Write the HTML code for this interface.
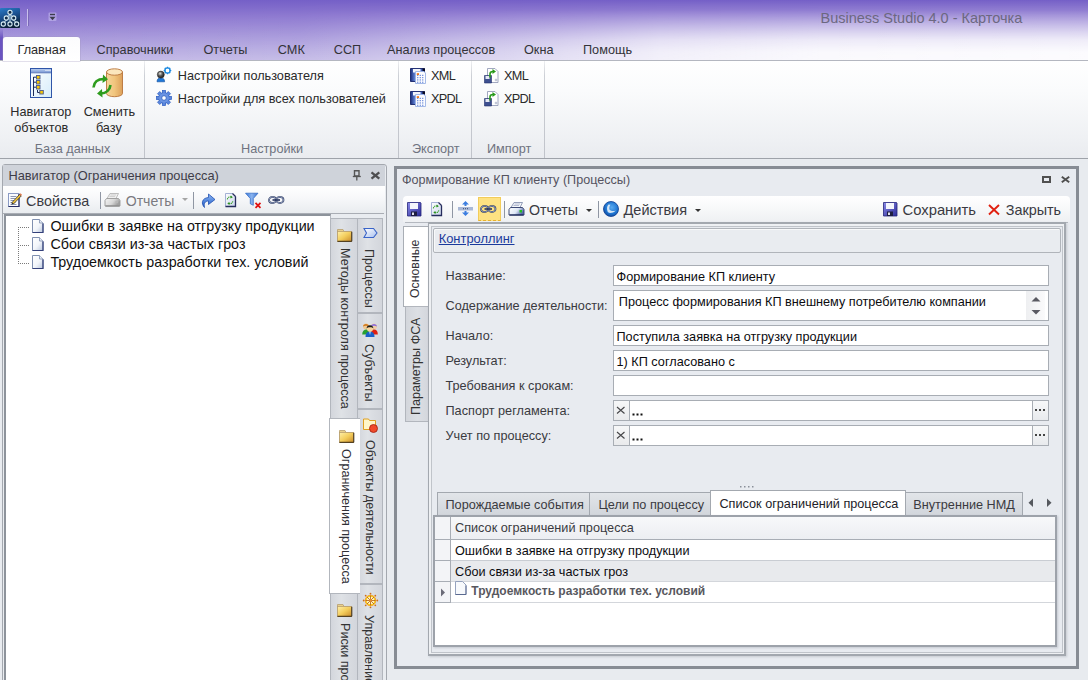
<!DOCTYPE html>
<html><head><meta charset="utf-8"><style>
*{box-sizing:border-box;margin:0;padding:0}
html,body{width:1088px;height:680px;overflow:hidden}
body{position:relative;background:#e8ebef;font-family:"Liberation Sans",sans-serif;font-size:12.7px;color:#1e1e1e}
.a{position:absolute}
.t{position:absolute;white-space:nowrap;line-height:1}
svg{position:absolute;overflow:visible}
.vt{position:absolute;white-space:nowrap;line-height:1;transform-origin:0 0;color:#333}
</style></head><body>
<div class="a" style="left:0px;top:0px;width:1088px;height:61px;background:linear-gradient(to bottom,#7560c7 0px,#8a75cf 14px,#a090d8 32px,#b4a8e0 48px,#c2b8e6 60px)"></div>
<div class="a" style="left:0px;top:0px;width:1088px;height:61px;background:linear-gradient(to right,rgba(255,255,255,0) 0px,rgba(255,255,255,0.08) 300px,rgba(255,255,255,0.45) 500px,rgba(255,255,255,0.8) 660px,rgba(255,255,255,0.92) 820px,rgba(255,255,255,0.95) 1088px);-webkit-mask-image:linear-gradient(to bottom,rgba(0,0,0,0) 0px,rgba(0,0,0,0.1) 10px,rgba(0,0,0,0.45) 24px,rgba(0,0,0,0.85) 40px,#000 52px)"></div>
<div class="a" style="left:0px;top:28px;width:3px;height:33px;background:linear-gradient(to bottom,rgba(100,80,190,0),#6a54c0 30%,#6a54c0)"></div>
<svg style="left:0px;top:8px" width="20" height="20" viewBox="0 0 20 20"><defs><linearGradient id="ai" x1="0" y1="0" x2="0.3" y2="1"><stop offset="0" stop-color="#2a7cc8"/><stop offset="0.5" stop-color="#1a4e8c"/><stop offset="1" stop-color="#0a2038"/></linearGradient></defs><rect x="0" y="0" width="20" height="20" rx="1" fill="url(#ai)"/><g stroke="#c8e0ec" stroke-width="1" fill="none"><path d="M10 6.5 L6.5 9.5 M10 6.5 L13.5 9.5 M10 6.5 V13.5 M6.5 12 L3.5 15 M13.5 12 L16.5 15"/></g><g fill="#0e2a48" stroke="#d8ecf4" stroke-width="1.1"><circle cx="10" cy="4.3" r="2.1"/><circle cx="6.3" cy="10" r="2.1"/><circle cx="13.7" cy="10" r="2.1"/><circle cx="3.3" cy="16" r="2.1"/><circle cx="10" cy="16" r="2.1"/><circle cx="16.7" cy="16" r="2.1"/></g></svg>
<div class="a" style="left:27px;top:9px;width:1px;height:17px;background:#c9c0ec"></div>
<div class="a" style="left:28px;top:9px;width:1px;height:17px;background:#7a68b8"></div>
<svg style="left:48px;top:12px" width="10" height="10" viewBox="0 0 10 10"><rect x="0.5" y="0.5" width="8" height="8.5" rx="1" fill="#c9bff0" opacity="0.55"/><path d="M2 2.5h5" stroke="#3c3c4c" stroke-width="1.4"/><path d="M1.5 4.8h6l-3 3.4z" fill="#3c3c4c"/></svg>
<div class="t" style="left:820.5px;top:11px;font-size:14.5px;color:#6c6880;">Business Studio 4.0 - Карточка</div>
<div class="a" style="left:0px;top:60px;width:1088px;height:99px;background:linear-gradient(to bottom,#ffffff 0px,#fafbfc 30px,#eef0f3 80px,#e9ebef 98px);border-top:1px solid #b4b7c0;border-bottom:1px solid #9ea2a9"></div>
<div class="a" style="left:3px;top:37px;width:77px;height:24px;background:linear-gradient(to bottom,#fbfbfd,#ffffff);border-radius:3px 3px 0 0;box-shadow:0 0 0 0.5px rgba(160,150,190,.6)"></div>
<div class="t" style="left:17.5px;top:44px;font-size:12.7px;color:#2a2a2a;">Главная</div>
<div class="t" style="left:96.5px;top:44px;font-size:12.7px;color:#333338;">Справочники</div>
<div class="t" style="left:203.5px;top:44px;font-size:12.7px;color:#333338;">Отчеты</div>
<div class="t" style="left:277.8px;top:44px;font-size:12.7px;color:#333338;">СМК</div>
<div class="t" style="left:333.8px;top:44px;font-size:12.7px;color:#333338;">ССП</div>
<div class="t" style="left:387px;top:44px;font-size:12.7px;color:#333338;">Анализ процессов</div>
<div class="t" style="left:524px;top:44px;font-size:12.7px;color:#333338;">Окна</div>
<div class="t" style="left:583px;top:44px;font-size:12.7px;color:#333338;">Помощь</div>
<div class="a" style="left:144px;top:61px;width:1px;height:97px;background:linear-gradient(to bottom,rgba(200,203,210,0.3),#cdd0d6 15%,#c0c3ca)"></div>
<div class="a" style="left:398px;top:61px;width:1px;height:97px;background:linear-gradient(to bottom,rgba(200,203,210,0.3),#cdd0d6 15%,#c0c3ca)"></div>
<div class="a" style="left:471px;top:61px;width:1px;height:97px;background:linear-gradient(to bottom,rgba(200,203,210,0.3),#cdd0d6 15%,#c0c3ca)"></div>
<div class="a" style="left:544px;top:61px;width:1px;height:97px;background:linear-gradient(to bottom,rgba(200,203,210,0.3),#cdd0d6 15%,#c0c3ca)"></div>
<svg style="left:30px;top:68px" width="23" height="30" viewBox="0 0 23 30"><defs><linearGradient id="nv" x1="0" y1="0" x2="1" y2="1"><stop offset="0" stop-color="#ffffff"/><stop offset="1" stop-color="#d6ecfa"/></linearGradient><linearGradient id="nvt" x1="0" y1="0" x2="0" y2="1"><stop offset="0" stop-color="#b8ccee"/><stop offset="1" stop-color="#7c9ad6"/></linearGradient></defs><rect x="0.5" y="0.5" width="21" height="29" fill="url(#nv)" stroke="#2f55a8" stroke-width="1"/><rect x="1" y="1" width="20" height="3.5" fill="url(#nvt)"/><path d="M1 4.8h20" stroke="#3a5aa8" stroke-width="0.8"/><g fill="#ffffff"><rect x="15.5" y="2" width="1" height="1"/><rect x="17.5" y="2" width="1" height="1"/><rect x="19.5" y="2" width="1" height="1"/></g><path d="M3.5 9v19M3.5 9.2h3M3.5 14.2h3M3.5 19.2h3M7.5 22v2.5h2.5" stroke="#1c2a5a" stroke-width="1" fill="none"/><g fill="#f8c808" stroke="#4a5a8a" stroke-width="0.9"><rect x="6.5" y="7.5" width="3.5" height="3.5"/><rect x="6.5" y="12.5" width="3.5" height="3.5"/><rect x="6.5" y="17.5" width="3.5" height="3.5"/><rect x="9.8" y="22.5" width="3.5" height="3.5"/></g></svg>
<svg style="left:91px;top:67px" width="34" height="31" viewBox="0 0 34 31"><defs><linearGradient id="db" x1="0" y1="0" x2="1" y2="0"><stop offset="0" stop-color="#f6d49a"/><stop offset="0.5" stop-color="#f1c57d"/><stop offset="1" stop-color="#dca05a"/></linearGradient></defs><path d="M15.5 5v21.5a8 3.2 0 0 0 16 0v-21.5z" fill="url(#db)" stroke="#b8743a" stroke-width="0.9"/><ellipse cx="23.5" cy="5" rx="8" ry="3.2" fill="#fbe6bd" stroke="#b8743a" stroke-width="0.9"/><path d="M2.5 20.5 C3 15 7 12 13 12" stroke="#2e9c1e" stroke-width="2.6" fill="none"/><path d="M12 7.5 L17 12.2 L11.5 16z" fill="#2e9c1e"/><path d="M19.5 18 C19 23 15 26.5 10 26.5" stroke="#2e9c1e" stroke-width="2.6" fill="none"/><path d="M11 22 L6 26.5 L11.5 30.5z" fill="#2e9c1e"/></svg>
<div class="t" style="left:10.3px;top:106px;font-size:12.7px;color:#2a2a2a;">Навигатор</div>
<div class="t" style="left:14.2px;top:122px;font-size:12.7px;color:#2a2a2a;">объектов</div>
<div class="t" style="left:83.7px;top:106px;font-size:12.7px;color:#2a2a2a;">Сменить</div>
<div class="t" style="left:95.9px;top:122px;font-size:12.7px;color:#2a2a2a;">базу</div>
<div class="t" style="left:34.7px;top:143px;font-size:12.7px;color:#6f7380;">База данных</div>
<svg style="left:156px;top:66px" width="15" height="16" viewBox="0 0 15 16"><defs><radialGradient id="hd" cx="0.4" cy="0.35" r="0.7"><stop offset="0" stop-color="#e8e8e0"/><stop offset="0.45" stop-color="#5a5a5a"/><stop offset="1" stop-color="#111"/></radialGradient></defs><path d="M1 15.8 C1 12.8 2.5 12 4.8 12 C7.1 12 8.6 12.8 8.6 15.8z" fill="#1e78d8" stroke="#0e4a9a" stroke-width="0.6"/><circle cx="4.8" cy="8.6" r="3.5" fill="url(#hd)" stroke="#222" stroke-width="0.5"/><g transform="translate(11.5,4.5)"><circle r="2.6" fill="none" stroke="#1a88e0" stroke-width="1.4"/><g stroke="#1a88e0" stroke-width="1.2"><path d="M0 -3.8v1.6M0 2.2v1.6M-3.8 0h1.6M2.2 0h1.6M-2.7 -2.7l1.1 1.1M1.6 1.6l1.1 1.1M2.7 -2.7l-1.1 1.1M-1.6 1.6l-1.1 1.1"/></g></g></svg>
<svg style="left:156px;top:90px" width="16" height="16" viewBox="0 0 16 16"><g transform="translate(8,8)"><circle r="5.3" fill="#5a86dc" stroke="#2f5fc0" stroke-width="1"/><g fill="#5a86dc" stroke="#2f5fc0" stroke-width="0.7"><rect x="-1.6" y="-7.6" width="3.2" height="3.2" transform="rotate(0)"/><rect x="-1.6" y="-7.6" width="3.2" height="3.2" transform="rotate(45)"/><rect x="-1.6" y="-7.6" width="3.2" height="3.2" transform="rotate(90)"/><rect x="-1.6" y="-7.6" width="3.2" height="3.2" transform="rotate(135)"/><rect x="-1.6" y="-7.6" width="3.2" height="3.2" transform="rotate(180)"/><rect x="-1.6" y="-7.6" width="3.2" height="3.2" transform="rotate(225)"/><rect x="-1.6" y="-7.6" width="3.2" height="3.2" transform="rotate(270)"/><rect x="-1.6" y="-7.6" width="3.2" height="3.2" transform="rotate(315)"/></g><circle r="5" fill="#6b94e2"/><circle r="2.3" fill="#ffffff" stroke="#2f5fc0" stroke-width="0.8"/></g></svg>
<div class="t" style="left:177.8px;top:70px;font-size:12.7px;color:#2a2a2a;">Настройки пользователя</div>
<div class="t" style="left:177.8px;top:93px;font-size:12.7px;color:#2a2a2a;">Настройки для всех пользователей</div>
<div class="t" style="left:241px;top:143px;font-size:12.7px;color:#6f7380;">Настройки</div>
<svg style="left:410px;top:68px" width="16" height="16" viewBox="0 0 16 16"><defs><linearGradient id="ex1" x1="0" y1="0" x2="1" y2="0"><stop offset="0" stop-color="#1a2c78"/><stop offset="0.35" stop-color="#6a8ee0"/><stop offset="1" stop-color="#2a4aa8"/></linearGradient></defs><path d="M0.5 0.5h14v13h-14z" fill="url(#ex1)" stroke="#16246a" stroke-width="0.9"/><rect x="3" y="1" width="7.5" height="3.5" fill="#f4f6fc"/><rect x="12.5" y="0.5" width="2.5" height="2.5" fill="#0a0a20"/><path d="M5.5 3.5h8.5l1.5 1.5v10.5h-10z" fill="#fbfcff" stroke="#9ab2e4" stroke-width="0.9"/><g fill="#4a70d0"><rect x="7.2" y="6.8" width="1.1" height="1.1"/><rect x="7.2" y="9.1" width="1.1" height="1.1"/><rect x="7.2" y="11.4" width="1.1" height="1.1"/><rect x="7.2" y="13.7" width="1.1" height="1.1"/><rect x="9.7" y="6.8" width="1.1" height="1.1"/><rect x="9.7" y="9.1" width="1.1" height="1.1"/><rect x="9.7" y="11.4" width="1.1" height="1.1"/><rect x="9.7" y="13.7" width="1.1" height="1.1"/><rect x="12.2" y="6.8" width="1.1" height="1.1"/><rect x="12.2" y="9.1" width="1.1" height="1.1"/><rect x="12.2" y="11.4" width="1.1" height="1.1"/><rect x="12.2" y="13.7" width="1.1" height="1.1"/></g><rect x="6.8" y="5.2" width="2.2" height="1.8" fill="#f07818"/></svg>
<svg style="left:410px;top:91px" width="16" height="16" viewBox="0 0 16 16"><defs><linearGradient id="ex2" x1="0" y1="0" x2="1" y2="0"><stop offset="0" stop-color="#1a2c78"/><stop offset="0.35" stop-color="#6a8ee0"/><stop offset="1" stop-color="#2a4aa8"/></linearGradient></defs><path d="M0.5 0.5h14v13h-14z" fill="url(#ex2)" stroke="#16246a" stroke-width="0.9"/><rect x="3" y="1" width="7.5" height="3.5" fill="#f4f6fc"/><rect x="12.5" y="0.5" width="2.5" height="2.5" fill="#0a0a20"/><path d="M5.5 3.5h8.5l1.5 1.5v10.5h-10z" fill="#fbfcff" stroke="#9ab2e4" stroke-width="0.9"/><g fill="#4a70d0"><rect x="7.2" y="6.8" width="1.1" height="1.1"/><rect x="7.2" y="9.1" width="1.1" height="1.1"/><rect x="7.2" y="11.4" width="1.1" height="1.1"/><rect x="7.2" y="13.7" width="1.1" height="1.1"/><rect x="9.7" y="6.8" width="1.1" height="1.1"/><rect x="9.7" y="9.1" width="1.1" height="1.1"/><rect x="9.7" y="11.4" width="1.1" height="1.1"/><rect x="9.7" y="13.7" width="1.1" height="1.1"/><rect x="12.2" y="6.8" width="1.1" height="1.1"/><rect x="12.2" y="9.1" width="1.1" height="1.1"/><rect x="12.2" y="11.4" width="1.1" height="1.1"/><rect x="12.2" y="13.7" width="1.1" height="1.1"/></g><rect x="6.8" y="5.2" width="2.2" height="1.8" fill="#f07818"/></svg>
<div class="t" style="left:430.9px;top:70px;font-size:12.7px;color:#2a2a2a;letter-spacing:-0.6px">XML</div>
<div class="t" style="left:430.9px;top:93px;font-size:12.7px;color:#2a2a2a;letter-spacing:-0.7px">XPDL</div>
<div class="t" style="left:412px;top:143px;font-size:12.7px;color:#6f7380;">Экспорт</div>
<svg style="left:484px;top:68px" width="15" height="16" viewBox="0 0 15 16"><path d="M3.5 0.5h7.5l3 3v11h-10.5z" fill="#ffffff" stroke="#8a92b0" stroke-width="0.8"/><circle cx="12" cy="12" r="0.9" fill="none" stroke="#8a92b0" stroke-width="0.6"/><path d="M0.5 7.5h7v7.5h-7z" fill="#3d4f90" stroke="#22306a" stroke-width="0.6"/><rect x="1.5" y="8" width="4" height="3" fill="#e6e9f4"/><path d="M6 9.5 V6 C6 4 7.5 3.5 9 3.5" stroke="#2a9a1c" stroke-width="1.6" fill="none"/><path d="M8.5 1 L12 3.6 L8.5 6z" fill="#2a9a1c"/></svg>
<svg style="left:484px;top:91px" width="15" height="16" viewBox="0 0 15 16"><path d="M3.5 0.5h7.5l3 3v11h-10.5z" fill="#ffffff" stroke="#8a92b0" stroke-width="0.8"/><circle cx="12" cy="12" r="0.9" fill="none" stroke="#8a92b0" stroke-width="0.6"/><path d="M0.5 7.5h7v7.5h-7z" fill="#3d4f90" stroke="#22306a" stroke-width="0.6"/><rect x="1.5" y="8" width="4" height="3" fill="#e6e9f4"/><path d="M6 9.5 V6 C6 4 7.5 3.5 9 3.5" stroke="#2a9a1c" stroke-width="1.6" fill="none"/><path d="M8.5 1 L12 3.6 L8.5 6z" fill="#2a9a1c"/></svg>
<div class="t" style="left:503.9px;top:70px;font-size:12.7px;color:#2a2a2a;letter-spacing:-0.6px">XML</div>
<div class="t" style="left:503.9px;top:93px;font-size:12.7px;color:#2a2a2a;letter-spacing:-0.7px">XPDL</div>
<div class="t" style="left:487px;top:143px;font-size:12.7px;color:#6f7380;">Импорт</div>
<div class="a" style="left:2px;top:164px;width:385px;height:530px;background:#e9ecf0;border:1px solid #a4a8af;border-radius:3px 3px 0 0"></div>
<div class="a" style="left:3px;top:165px;width:382px;height:21px;background:#cfd3da"></div>
<div class="t" style="left:8.4px;top:170px;font-size:12.8px;color:#3e3c48;">Навигатор (Ограничения процесса)</div>
<svg style="left:352px;top:170px" width="10" height="11" viewBox="0 0 10 11"><path d="M2.5 0.8h4.5v5.2h-4.5z" fill="none" stroke="#555" stroke-width="1.4"/><path d="M0.8 6.5h8" stroke="#555" stroke-width="1.3"/><path d="M4.8 6.5v4" stroke="#555" stroke-width="1.3"/></svg>
<svg style="left:370px;top:171px" width="11" height="9" viewBox="0 0 11 9"><path d="M1.5 1.3l7.8 6.4M9.3 1.3l-7.8 6.4" stroke="#4e4e50" stroke-width="2.3"/></svg>
<div class="a" style="left:3px;top:186px;width:382px;height:27px;background:linear-gradient(to bottom,#ffffff 0px,#f7f8fa 12px,#e9ecef 27px)"></div>
<div class="a" style="left:3px;top:213px;width:381px;height:1px;background:#a9adb4"></div>
<svg style="left:7px;top:192px" width="15" height="16" viewBox="0 0 15 16"><rect x="1.5" y="1.5" width="10.5" height="13" fill="#fafcff" stroke="#8a9ac4" stroke-width="1"/><path d="M1.5 14.5h10.5v-12.5" fill="none" stroke="#262c64" stroke-width="1.2"/><g stroke="#7f8aa8" stroke-width="0.9"><path d="M3.5 4.5h6M3.5 6.5h5M3.5 8.5h4M3.5 10.5h5M3.5 12.5h6"/></g><path d="M5 10.5 L12.5 2.5 L14.2 4 L6.5 12z" fill="#f2c43a" stroke="#222" stroke-width="0.7"/><path d="M12.5 2.5 L13.5 1.3 L15 2.8 L14.2 4z" fill="#e07a50"/><path d="M5 10.5 L4.5 12.5 L6.5 12z" fill="#222"/></svg>
<div class="t" style="left:26px;top:194px;font-size:14.4px;color:#3a3a42;">Свойства</div>
<div class="a" style="left:100px;top:192px;width:1px;height:17px;background:#8f96a3"></div>
<svg style="left:104px;top:192px" width="17" height="16" viewBox="0 0 17 16"><defs><linearGradient id="prg" x1="0" y1="0" x2="1" y2="0.4"><stop offset="0" stop-color="#f4f4f4"/><stop offset="0.6" stop-color="#d8d8d8"/><stop offset="1" stop-color="#a0a0a0"/></linearGradient></defs><path d="M6 1.5h8.5l-2.5 5h-9z" fill="#efefef" stroke="#b0b0b0" stroke-width="0.8"/><path d="M6.5 3h5.5M5.5 4.5h5.5" stroke="#c4c4c4" stroke-width="0.7"/><path d="M2.5 6.5h12l1.5 2v5.5h-15v-5.5z" fill="url(#prg)" stroke="#9a9a9a" stroke-width="0.9"/><path d="M1.5 14h14" stroke="#8a8a8a" stroke-width="1.2"/><rect x="11.5" y="9" width="2.5" height="2" fill="#b8b8b8"/></svg>
<div class="t" style="left:125.7px;top:194px;font-size:14.1px;color:#7a7a80;">Отчеты</div>
<svg style="left:182px;top:198px" width="6" height="4" viewBox="0 0 6 4"><path d="M0 0h6l-3 3z" fill="#a5a5a5"/></svg>
<div class="a" style="left:193px;top:192px;width:1px;height:17px;background:#8f96a3"></div>
<svg style="left:201px;top:192px" width="15" height="16" viewBox="0 0 15 16"><defs><linearGradient id="ra" x1="0" y1="0" x2="0" y2="1"><stop offset="0" stop-color="#8fb8f4"/><stop offset="1" stop-color="#1f5cc8"/></linearGradient></defs><path d="M3.5 15.5 C0 12 0.5 6 7.5 5.5 V2 L14 7.5 L7.5 12.5 V9 C4 9 2.5 11.5 3.5 15.5z" fill="url(#ra)" stroke="#1f4fb0" stroke-width="0.8"/></svg>
<svg style="left:224px;top:192px" width="13" height="16" viewBox="0 0 13 16"><defs><linearGradient id="rd1" x1="0" y1="0" x2="1" y2="1"><stop offset="0" stop-color="#ffffff"/><stop offset="1" stop-color="#c8d4ea"/></linearGradient></defs><path d="M1.5 1.5h7l3 3v10h-10z" fill="url(#rd1)" stroke="#9aa8d0" stroke-width="0.9"/><path d="M8.5 1.5l3 3M11.5 4.5v10h-10" fill="none" stroke="#262c5c" stroke-width="1.3"/><path d="M3.3 7.3 C3.8 5 6 4.5 7.5 5.2" stroke="#3aa02a" stroke-width="1.1" fill="none" stroke-dasharray="1.2 0.6"/><path d="M6.8 3.6 L8.8 5.3 L6.5 6.4z" fill="#2a9020"/><path d="M8.8 9.3 C8.3 11.6 6 12 4.6 11.3" stroke="#3aa02a" stroke-width="1.1" fill="none" stroke-dasharray="1.2 0.6"/><path d="M5.3 13 L3.3 11.2 L5.5 10.1z" fill="#2a9020"/></svg>
<svg style="left:245px;top:192px" width="17" height="17" viewBox="0 0 17 17"><defs><linearGradient id="fl" x1="0" y1="0" x2="1" y2="0"><stop offset="0" stop-color="#3c7ad8"/><stop offset="0.5" stop-color="#8ab4f0"/><stop offset="1" stop-color="#3c74d0"/></linearGradient></defs><path d="M0.5 1.2h12.5l-4.7 5.3v6.8l-3 -1.5v-5.3z" fill="url(#fl)" stroke="#2d66c4" stroke-width="0.7"/><path d="M10.5 10.8l5 5M15.5 10.8l-5 5" stroke="#e01010" stroke-width="1.7"/></svg>
<svg style="left:268px;top:196px" width="17" height="9" viewBox="0 0 17 9"><g fill="none"><rect x="1" y="1.2" width="7.2" height="5.6" rx="2.8" stroke="#26345e" stroke-width="1.7"/><rect x="1" y="1.2" width="7.2" height="5.6" rx="2.8" stroke="#c8d4ec" stroke-width="0.6"/><rect x="8.3" y="1.2" width="7.2" height="5.6" rx="2.8" stroke="#26345e" stroke-width="1.7"/><rect x="8.3" y="1.2" width="7.2" height="5.6" rx="2.8" stroke="#c8d4ec" stroke-width="0.6"/></g><path d="M4.5 4h7.5" stroke="#26345e" stroke-width="1.6"/></svg>
<div class="a" style="left:4px;top:214px;width:327px;height:480px;background:#fff;border-top:2px solid #8d939b;border-left:2px solid #8d939b;border-right:1px solid #b5b9c0"></div>
<svg style="left:17px;top:227px" width="14" height="40" viewBox="0 0 14 40"><g fill="#7a7a7a"><rect x="1" y="0" width="1" height="1"/><rect x="1" y="2" width="1" height="1"/><rect x="1" y="4" width="1" height="1"/><rect x="1" y="6" width="1" height="1"/><rect x="1" y="8" width="1" height="1"/><rect x="1" y="10" width="1" height="1"/><rect x="1" y="12" width="1" height="1"/><rect x="1" y="14" width="1" height="1"/><rect x="1" y="16" width="1" height="1"/><rect x="1" y="18" width="1" height="1"/><rect x="1" y="20" width="1" height="1"/><rect x="1" y="22" width="1" height="1"/><rect x="1" y="24" width="1" height="1"/><rect x="1" y="26" width="1" height="1"/><rect x="1" y="28" width="1" height="1"/><rect x="1" y="30" width="1" height="1"/><rect x="1" y="32" width="1" height="1"/><rect x="1" y="34" width="1" height="1"/><rect x="1" y="36" width="1" height="1"/><rect x="3" y="0" width="1" height="1"/><rect x="5" y="0" width="1" height="1"/><rect x="7" y="0" width="1" height="1"/><rect x="9" y="0" width="1" height="1"/><rect x="11" y="0" width="1" height="1"/><rect x="3" y="18" width="1" height="1"/><rect x="5" y="18" width="1" height="1"/><rect x="7" y="18" width="1" height="1"/><rect x="9" y="18" width="1" height="1"/><rect x="11" y="18" width="1" height="1"/><rect x="3" y="36" width="1" height="1"/><rect x="5" y="36" width="1" height="1"/><rect x="7" y="36" width="1" height="1"/><rect x="9" y="36" width="1" height="1"/><rect x="11" y="36" width="1" height="1"/></g></svg>
<svg style="left:32px;top:219px" width="12" height="14" viewBox="0 0 12 14"><defs><linearGradient id="dg0" x1="0" y1="0" x2="1" y2="1"><stop offset="0" stop-color="#ffffff"/><stop offset="0.55" stop-color="#f2f5fa"/><stop offset="1" stop-color="#b9c6dc"/></linearGradient></defs><path d="M0.5 0.5h7l3.5 3.5v9.5h-10.5z" fill="url(#dg0)" stroke="#8090b0" stroke-width="1"/><path d="M7.5 0.5v3.5h3.5" fill="#e8edf5" stroke="#8090b0" stroke-width="0.8"/><path d="M0.5 13.5h10.5v-9" fill="none" stroke="#34407a" stroke-width="1.2"/></svg>
<div class="t" style="left:50.4px;top:219px;font-size:14.3px;color:#101010;">Ошибки в заявке на отгрузку продукции</div>
<svg style="left:32px;top:237px" width="12" height="14" viewBox="0 0 12 14"><defs><linearGradient id="dg1" x1="0" y1="0" x2="1" y2="1"><stop offset="0" stop-color="#ffffff"/><stop offset="0.55" stop-color="#f2f5fa"/><stop offset="1" stop-color="#b9c6dc"/></linearGradient></defs><path d="M0.5 0.5h7l3.5 3.5v9.5h-10.5z" fill="url(#dg1)" stroke="#8090b0" stroke-width="1"/><path d="M7.5 0.5v3.5h3.5" fill="#e8edf5" stroke="#8090b0" stroke-width="0.8"/><path d="M0.5 13.5h10.5v-9" fill="none" stroke="#34407a" stroke-width="1.2"/></svg>
<div class="t" style="left:50.4px;top:237px;font-size:14.3px;color:#101010;">Сбои связи из-за частых гроз</div>
<svg style="left:32px;top:255px" width="12" height="14" viewBox="0 0 12 14"><defs><linearGradient id="dg2" x1="0" y1="0" x2="1" y2="1"><stop offset="0" stop-color="#ffffff"/><stop offset="0.55" stop-color="#f2f5fa"/><stop offset="1" stop-color="#b9c6dc"/></linearGradient></defs><path d="M0.5 0.5h7l3.5 3.5v9.5h-10.5z" fill="url(#dg2)" stroke="#8090b0" stroke-width="1"/><path d="M7.5 0.5v3.5h3.5" fill="#e8edf5" stroke="#8090b0" stroke-width="0.8"/><path d="M0.5 13.5h10.5v-9" fill="none" stroke="#34407a" stroke-width="1.2"/></svg>
<div class="t" style="left:50.4px;top:255px;font-size:14.3px;color:#101010;">Трудоемкость разработки тех. условий</div>
<div class="a" style="left:330px;top:218px;width:28px;height:201px;background:linear-gradient(to right,#d3d6dc,#dfe2e6 40%,#dadde2 60%,#d3d6dc);border:1px solid #b2b6bd"></div>
<div class="a" style="left:330px;top:593px;width:28px;height:100px;background:linear-gradient(to right,#d3d6dc,#dfe2e6 40%,#dadde2 60%,#d3d6dc);border:1px solid #b2b6bd"></div>
<div class="a" style="left:357px;top:218px;width:26px;height:95px;background:linear-gradient(to right,#d3d6dc,#dfe2e6 40%,#dadde2 60%,#d3d6dc);border:1px solid #b2b6bd"></div>
<div class="a" style="left:357px;top:313px;width:26px;height:96px;background:linear-gradient(to right,#d3d6dc,#dfe2e6 40%,#dadde2 60%,#d3d6dc);border:1px solid #b2b6bd"></div>
<div class="a" style="left:357px;top:409px;width:26px;height:175px;background:linear-gradient(to right,#d3d6dc,#dfe2e6 40%,#dadde2 60%,#d3d6dc);border:1px solid #b2b6bd"></div>
<div class="a" style="left:357px;top:584px;width:26px;height:110px;background:linear-gradient(to right,#d3d6dc,#dfe2e6 40%,#dadde2 60%,#d3d6dc);border:1px solid #b2b6bd"></div>
<div class="a" style="left:329px;top:418px;width:31px;height:176px;background:#ffffff;border:1px solid #b2b6bd;border-right:none"></div>
<svg style="left:337px;top:229px" width="16" height="13" viewBox="0 0 16 13"><defs><linearGradient id="fd1" x1="0" y1="0" x2="1" y2="1"><stop offset="0" stop-color="#fff0a8"/><stop offset="0.5" stop-color="#f3cd5c"/><stop offset="1" stop-color="#c98a2a"/></linearGradient></defs><path d="M0.5 0.5h5.5l1 2h7.5v10h-14z" fill="#e9d08c" stroke="#b8a070" stroke-width="0.8"/><rect x="0.5" y="2.5" width="14" height="10" fill="url(#fd1)" stroke="#b8a070" stroke-width="0.8"/><path d="M0.5 12.3h14.3v-9.5" fill="none" stroke="#3a2a10" stroke-width="1"/></svg>
<svg style="left:339px;top:430px" width="16" height="13" viewBox="0 0 16 13"><defs><linearGradient id="fd2" x1="0" y1="0" x2="1" y2="1"><stop offset="0" stop-color="#fff0a8"/><stop offset="0.5" stop-color="#f3cd5c"/><stop offset="1" stop-color="#c98a2a"/></linearGradient></defs><path d="M0.5 0.5h5.5l1 2h7.5v10h-14z" fill="#e9d08c" stroke="#b8a070" stroke-width="0.8"/><rect x="0.5" y="2.5" width="14" height="10" fill="url(#fd2)" stroke="#b8a070" stroke-width="0.8"/><path d="M0.5 12.3h14.3v-9.5" fill="none" stroke="#3a2a10" stroke-width="1"/></svg>
<svg style="left:337px;top:604px" width="16" height="13" viewBox="0 0 16 13"><defs><linearGradient id="fd3" x1="0" y1="0" x2="1" y2="1"><stop offset="0" stop-color="#fff0a8"/><stop offset="0.5" stop-color="#f3cd5c"/><stop offset="1" stop-color="#c98a2a"/></linearGradient></defs><path d="M0.5 0.5h5.5l1 2h7.5v10h-14z" fill="#e9d08c" stroke="#b8a070" stroke-width="0.8"/><rect x="0.5" y="2.5" width="14" height="10" fill="url(#fd3)" stroke="#b8a070" stroke-width="0.8"/><path d="M0.5 12.3h14.3v-9.5" fill="none" stroke="#3a2a10" stroke-width="1"/></svg>
<svg style="left:363px;top:227px" width="16" height="13" viewBox="0 0 16 13"><defs><linearGradient id="pc" x1="0" y1="0" x2="1" y2="1"><stop offset="0" stop-color="#ffffff"/><stop offset="1" stop-color="#a8c0ee"/></linearGradient></defs><path d="M1 1.5h9.5l3.5 4.5l-3.5 4.5h-9.5l2.5 -4.5z" fill="url(#pc)" stroke="#3a64c8" stroke-width="1.1"/></svg>
<svg style="left:362px;top:322px" width="16" height="15" viewBox="0 0 16 15"><circle cx="4" cy="4.5" r="3" fill="#f0c890"/><path d="M1 4.5c0-3.5 6-3.5 6 0c-1.5-1-4.5-1-6 0z" fill="#d07a20"/><circle cx="12" cy="4.5" r="3" fill="#f0d0a8"/><path d="M9 4.5c0-3.5 6-3.5 6 0c-1.5-1-4.5-1-6 0z" fill="#8a6ee0"/><path d="M0.2 12.5c0-3.5 1.8-5 4.3-5s3 2 3 5z" fill="#28a030"/><path d="M8.5 12.5c0-3 1-5 3.5-5s3.8 1.5 3.8 5z" fill="#e02010"/><path d="M3.5 15c0-4 2-5.5 4.5-5.5s4.5 1.5 4.5 5.5z" fill="#1a60c8"/><path d="M7.3 10h1.4l-0.7 3z" fill="#bfe8f8"/><circle cx="8" cy="6.8" r="3" fill="#f8d49a"/><path d="M4.6 6.5c-0.3-4.5 7-4.5 6.8 0c-0.8-1.6-6-1.6-6.8 0z" fill="#1a1a1a"/></svg>
<svg style="left:363px;top:418px" width="16" height="15" viewBox="0 0 16 15"><path d="M0.5 1h5l1 1.5h6v9h-12z" fill="#fff6c8" stroke="#e0a020" stroke-width="1"/><circle cx="10.5" cy="10.5" r="4" fill="#f04a2a" stroke="#a02010" stroke-width="0.8"/></svg>
<svg style="left:363px;top:593px" width="15" height="15" viewBox="0 0 15 15"><circle cx="14.30" cy="7.50" r="0.9" fill="#d07018"/><circle cx="12.31" cy="12.31" r="0.9" fill="#d07018"/><circle cx="7.50" cy="14.30" r="0.9" fill="#d07018"/><circle cx="2.69" cy="12.31" r="0.9" fill="#d07018"/><circle cx="0.70" cy="7.50" r="0.9" fill="#d07018"/><circle cx="2.69" cy="2.69" r="0.9" fill="#d07018"/><circle cx="7.50" cy="0.70" r="0.9" fill="#d07018"/><circle cx="12.31" cy="2.69" r="0.9" fill="#d07018"/><circle cx="7.5" cy="7.5" r="5.2" fill="none" stroke="#f04818" stroke-width="0.8"/><circle cx="7.5" cy="7.5" r="4.6" fill="#fff3c0" stroke="#f8c818" stroke-width="1.6"/><g stroke="#b05a10" stroke-width="0.8"><path d="M7.5 2.5v10M2.5 7.5h10M4 4l7 7M11 4l-7 7"/></g><circle cx="7.5" cy="7.5" r="1.3" fill="#e89030"/></svg>
<div class="vt" style="left:350.5px;top:248px;font-size:12.6px;color:#333;transform:rotate(90deg)">Методы контроля процесса</div>
<div class="vt" style="left:352px;top:449px;font-size:12.6px;color:#303036;transform:rotate(90deg)">Ограничения процесса</div>
<div class="vt" style="left:351px;top:623px;font-size:12.6px;color:#333;transform:rotate(90deg)">Риски процесса</div>
<div class="vt" style="left:375px;top:248.5px;font-size:12.6px;color:#333;transform:rotate(90deg)">Процессы</div>
<div class="vt" style="left:375px;top:344px;font-size:12.6px;color:#333;transform:rotate(90deg)">Субъекты</div>
<div class="vt" style="left:375.5px;top:439.8px;font-size:12.5px;color:#333;transform:rotate(90deg)">Объекты деятельности</div>
<div class="vt" style="left:375px;top:614.7px;font-size:12.6px;color:#333;transform:rotate(90deg)">Управление</div>
<div class="a" style="left:394px;top:166px;width:685px;height:503px;background:#e8ebf0;border:3px solid #878c94"></div>
<div class="t" style="left:402px;top:174px;font-size:12.6px;color:#55535f;">Формирование КП клиенту (Процессы)</div>
<svg style="left:1042px;top:176px" width="9" height="7" viewBox="0 0 9 7"><rect x="1" y="1" width="7" height="5" fill="none" stroke="#505050" stroke-width="2"/></svg>
<svg style="left:1061px;top:176px" width="9" height="7" viewBox="0 0 9 7"><path d="M0.8 0.8l7.4 5.4M8.2 0.8l-7.4 5.4" stroke="#505050" stroke-width="2"/></svg>
<div class="a" style="left:403px;top:196px;width:667px;height:26px;background:linear-gradient(to bottom,#ffffff 0px,#f9fafb 10px,#eef0f3 26px);border-radius:4px 4px 0 0"></div>
<div class="a" style="left:405px;top:222px;width:663px;height:1px;background:#b4b8bf"></div>
<svg style="left:407px;top:202px" width="14" height="14" viewBox="0 0 14 14"><defs><linearGradient id="sv1" x1="0" y1="0" x2="1" y2="1"><stop offset="0" stop-color="#8a8ae8"/><stop offset="1" stop-color="#2c2c98"/></linearGradient></defs><path d="M0.5 0.5h13l0.5 0.5v13h-13.5z" fill="url(#sv1)" stroke="#24247a" stroke-width="0.8"/><rect x="3" y="1" width="8" height="6" fill="#f4f6fc"/><rect x="4" y="9.5" width="6" height="4.5" fill="#1e1e40"/><rect x="5" y="10.5" width="2" height="2.5" fill="#e0e0ee"/></svg>
<svg style="left:430px;top:201px" width="13" height="16" viewBox="0 0 13 16"><defs><linearGradient id="rd2" x1="0" y1="0" x2="1" y2="1"><stop offset="0" stop-color="#ffffff"/><stop offset="1" stop-color="#c8d4ea"/></linearGradient></defs><path d="M1.5 1.5h7l3 3v10h-10z" fill="url(#rd2)" stroke="#9aa8d0" stroke-width="0.9"/><path d="M8.5 1.5l3 3M11.5 4.5v10h-10" fill="none" stroke="#262c5c" stroke-width="1.3"/><path d="M3.3 7.3 C3.8 5 6 4.5 7.5 5.2" stroke="#3aa02a" stroke-width="1.1" fill="none" stroke-dasharray="1.2 0.6"/><path d="M6.8 3.6 L8.8 5.3 L6.5 6.4z" fill="#2a9020"/><path d="M8.8 9.3 C8.3 11.6 6 12 4.6 11.3" stroke="#3aa02a" stroke-width="1.1" fill="none" stroke-dasharray="1.2 0.6"/><path d="M5.3 13 L3.3 11.2 L5.5 10.1z" fill="#2a9020"/></svg>
<div class="a" style="left:452px;top:201px;width:1px;height:17px;background:#8f96a3"></div>
<svg style="left:457px;top:200px" width="17" height="17" viewBox="0 0 17 17"><path d="M8.5 1 L12 4.5 H9.5 V6 H7.5 V4.5 H5z" fill="#3c7ee0"/><rect x="1" y="7" width="15" height="3.5" fill="#a9b8d6"/><g fill="#3a4a70"><rect x="6" y="8.2" width="1" height="1"/><rect x="8" y="8.2" width="1" height="1"/><rect x="10" y="8.2" width="1" height="1"/></g><path d="M8.5 16 L12 12.5 H9.5 V11 H7.5 V12.5 H5z" fill="#3c7ee0"/></svg>
<div class="a" style="left:478px;top:197px;width:23px;height:24px;background:#fee282;border:1px solid #f2cc5a;border-bottom:1px dashed #e8b030"></div>
<svg style="left:480px;top:205px" width="17" height="9" viewBox="0 0 17 9"><g fill="none"><rect x="1" y="1.2" width="7.2" height="5.6" rx="2.8" stroke="#26345e" stroke-width="1.7"/><rect x="1" y="1.2" width="7.2" height="5.6" rx="2.8" stroke="#c8d4ec" stroke-width="0.6"/><rect x="8.3" y="1.2" width="7.2" height="5.6" rx="2.8" stroke="#26345e" stroke-width="1.7"/><rect x="8.3" y="1.2" width="7.2" height="5.6" rx="2.8" stroke="#c8d4ec" stroke-width="0.6"/></g><path d="M4.5 4h7.5" stroke="#26345e" stroke-width="1.6"/></svg>
<div class="a" style="left:504px;top:201px;width:1px;height:17px;background:#8f96a3"></div>
<svg style="left:508px;top:201px" width="17" height="16" viewBox="0 0 17 16"><defs><linearGradient id="prb" x1="0" y1="0" x2="1" y2="0.4"><stop offset="0" stop-color="#ffffff"/><stop offset="0.6" stop-color="#dfe8f6"/><stop offset="1" stop-color="#5a6ea8"/></linearGradient></defs><path d="M6 1.5h8.5l-2.5 5h-9z" fill="#f4f6fa" stroke="#7a86a8" stroke-width="0.8"/><path d="M6.5 3h5.5M5.5 4.5h5.5" stroke="#9aa4c0" stroke-width="0.7"/><path d="M2.5 6.5h12l1.5 2v5.5h-15v-5.5z" fill="url(#prb)" stroke="#2e3a6a" stroke-width="0.9"/><path d="M1.5 14h14" stroke="#1e2a5a" stroke-width="1.2"/><rect x="11.5" y="9" width="2.5" height="2.5" fill="#22c020"/></svg>
<div class="t" style="left:529px;top:203px;font-size:14.2px;color:#3a3a42;">Отчеты</div>
<svg style="left:586px;top:209px" width="6" height="4" viewBox="0 0 6 4"><path d="M0 0h6l-3 3z" fill="#333"/></svg>
<div class="a" style="left:598px;top:201px;width:1px;height:17px;background:#8f96a3"></div>
<svg style="left:603px;top:201px" width="16" height="16" viewBox="0 0 16 16"><defs><radialGradient id="gl" cx="0.55" cy="0.4" r="0.7"><stop offset="0" stop-color="#5aaaf0"/><stop offset="0.6" stop-color="#1e74d0"/><stop offset="1" stop-color="#0a3a8a"/></radialGradient></defs><circle cx="8" cy="8" r="7.5" fill="url(#gl)" stroke="#0c3c90" stroke-width="0.8"/><path d="M5.5 3.5 C3.8 5 3.5 8 4.8 11 C6.5 12.5 9.5 12.5 12.8 9.5 C10 10.5 7.5 10 6.5 8.5 C6 7 6.5 5 7.5 3.8z" fill="#e6f0f8" opacity="0.9"/></svg>
<div class="t" style="left:623.5px;top:203px;font-size:14.5px;color:#3a3a42;">Действия</div>
<svg style="left:695px;top:209px" width="6" height="4" viewBox="0 0 6 4"><path d="M0 0h6l-3 3z" fill="#333"/></svg>
<svg style="left:883px;top:202px" width="14" height="14" viewBox="0 0 14 14"><defs><linearGradient id="sv2" x1="0" y1="0" x2="1" y2="1"><stop offset="0" stop-color="#8a8ae8"/><stop offset="1" stop-color="#2c2c98"/></linearGradient></defs><path d="M0.5 0.5h13l0.5 0.5v13h-13.5z" fill="url(#sv2)" stroke="#24247a" stroke-width="0.8"/><rect x="3" y="1" width="8" height="6" fill="#f4f6fc"/><rect x="4" y="9.5" width="6" height="4.5" fill="#1e1e40"/><rect x="5" y="10.5" width="2" height="2.5" fill="#e0e0ee"/></svg>
<div class="t" style="left:902.5px;top:203px;font-size:14.8px;color:#3a3a42;">Сохранить</div>
<svg style="left:988px;top:204px" width="12" height="11" viewBox="0 0 12 11"><path d="M1 1l10 9.5M11 1l-10 9.5" stroke="#e02010" stroke-width="1.9"/></svg>
<div class="t" style="left:1005.7px;top:203px;font-size:14.4px;color:#3a3a42;">Закрыть</div>
<div class="a" style="left:403px;top:226px;width:27px;height:81px;background:#ffffff;border:1px solid #a9aeb5;border-right:none"></div>
<div class="a" style="left:405px;top:306px;width:24px;height:116px;background:linear-gradient(to right,#d3d6dc,#dcdfe4 50%,#d3d6dc);border:1px solid #b2b6bd;border-right:none"></div>
<div class="vt" style="left:408.7px;top:298px;font-size:12.3px;color:#303036;transform:rotate(-90deg)">Основные</div>
<div class="vt" style="left:410px;top:415px;font-size:12.6px;color:#333;transform:rotate(-90deg)">Параметры ФСА</div>
<div class="a" style="left:428px;top:222px;width:638px;height:434px;border-style:solid;border-color:#a3a8af;border-width:2px 2px 2px 1px;background:#eef0f3;box-shadow:1px 1px 2px rgba(140,145,155,.35)"></div>
<div class="a" style="left:431px;top:226px;width:632px;height:427px;border:1px solid #c0c4ca;background:#e8ebf0"></div>
<div class="a" style="left:433px;top:228px;width:628px;height:25px;border:1px solid #b0b4ba;border-radius:2px;background:#e9ecf0;box-shadow:inset 1px 1px 0 #f8f9fa"></div>
<div class="t" style="left:438.7px;top:233px;font-size:12.9px;color:#1a3a9c;text-decoration:underline">Контроллинг</div>
<div class="t" style="left:445.5px;top:270px;font-size:12.7px;color:#3a3a40;">Название:</div>
<div class="t" style="left:445.5px;top:300px;font-size:12.7px;color:#3a3a40;">Содержание деятельности:</div>
<div class="t" style="left:445.5px;top:330px;font-size:12.7px;color:#3a3a40;">Начало:</div>
<div class="t" style="left:445.5px;top:355px;font-size:12.7px;color:#3a3a40;">Результат:</div>
<div class="t" style="left:445.5px;top:380px;font-size:12.7px;color:#3a3a40;">Требования к срокам:</div>
<div class="t" style="left:445.5px;top:405px;font-size:12.7px;color:#3a3a40;">Паспорт регламента:</div>
<div class="t" style="left:445.5px;top:430px;font-size:12.7px;color:#3a3a40;">Учет по процессу:</div>
<div class="a" style="left:613px;top:265px;width:436px;height:21px;background:#fff;border:1px solid #a8adb4"></div>
<div class="a" style="left:613px;top:290px;width:436px;height:31px;background:#fff;border:1px solid #a8adb4"></div>
<div class="a" style="left:613px;top:325px;width:436px;height:21px;background:#fff;border:1px solid #a8adb4"></div>
<div class="a" style="left:613px;top:350px;width:436px;height:21px;background:#fff;border:1px solid #a8adb4"></div>
<div class="a" style="left:613px;top:375px;width:436px;height:21px;background:#fff;border:1px solid #a8adb4"></div>
<div class="a" style="left:613px;top:400px;width:436px;height:21px;background:#fff;border:1px solid #a8adb4"></div>
<div class="a" style="left:613px;top:425px;width:436px;height:21px;background:#fff;border:1px solid #a8adb4"></div>
<div class="t" style="left:616.5px;top:271px;font-size:12.7px;color:#0c0c10;">Формирование КП клиенту</div>
<div class="t" style="left:618.8px;top:296px;font-size:12.7px;color:#0c0c10;">Процесс формирования КП внешнему потребителю компании</div>
<div class="t" style="left:616.5px;top:331px;font-size:12.7px;color:#0c0c10;">Поступила заявка на отгрузку продукции</div>
<div class="t" style="left:616.5px;top:356px;font-size:12.7px;color:#0c0c10;">1) КП согласовано с</div>
<div class="a" style="left:1026px;top:291px;width:19px;height:29px;background:linear-gradient(to right,#eeeff1,#fafafb)"></div>
<svg style="left:1030px;top:294px" width="12" height="24" viewBox="0 0 12 24"><path d="M1.5 7.5 L6 3 L10.5 7.5Z" fill="#5a5a62"/><path d="M1.5 16 L6 20.5 L10.5 16Z" fill="#5a5a62"/></svg>
<div class="a" style="left:614px;top:401px;width:16px;height:19px;background:linear-gradient(to bottom,#f6f7f8,#e9eaec);border-right:1px solid #a8adb4"></div>
<svg style="left:616px;top:406px" width="10" height="9" viewBox="0 0 10 9"><path d="M1 1l7.5 6.5M8.5 1l-7.5 6.5" stroke="#454548" stroke-width="1.1"/></svg>
<svg style="left:632px;top:413px" width="12" height="3" viewBox="0 0 12 3"><g fill="#111"><rect x="0.5" y="0.5" width="2" height="2"/><rect x="4.5" y="0.5" width="2" height="2"/><rect x="8.5" y="0.5" width="2" height="2"/></g></svg>
<div class="a" style="left:1032px;top:401px;width:16px;height:19px;background:linear-gradient(to bottom,#f7f8f9,#e8eaed);border-left:1px solid #a8adb4"></div>
<svg style="left:1034px;top:409px" width="12" height="3" viewBox="0 0 12 3"><g fill="#444"><rect x="1" y="0" width="2" height="2"/><rect x="5" y="0" width="2" height="2"/><rect x="9" y="0" width="2" height="2"/></g></svg>
<div class="a" style="left:614px;top:426px;width:16px;height:19px;background:linear-gradient(to bottom,#f6f7f8,#e9eaec);border-right:1px solid #a8adb4"></div>
<svg style="left:616px;top:431px" width="10" height="9" viewBox="0 0 10 9"><path d="M1 1l7.5 6.5M8.5 1l-7.5 6.5" stroke="#454548" stroke-width="1.1"/></svg>
<svg style="left:632px;top:438px" width="12" height="3" viewBox="0 0 12 3"><g fill="#111"><rect x="0.5" y="0.5" width="2" height="2"/><rect x="4.5" y="0.5" width="2" height="2"/><rect x="8.5" y="0.5" width="2" height="2"/></g></svg>
<div class="a" style="left:1032px;top:426px;width:16px;height:19px;background:linear-gradient(to bottom,#f7f8f9,#e8eaed);border-left:1px solid #a8adb4"></div>
<svg style="left:1034px;top:434px" width="12" height="3" viewBox="0 0 12 3"><g fill="#444"><rect x="1" y="0" width="2" height="2"/><rect x="5" y="0" width="2" height="2"/><rect x="9" y="0" width="2" height="2"/></g></svg>
<svg style="left:740px;top:486px" width="14" height="2" viewBox="0 0 14 2"><g fill="#8a9099"><rect x="0" y="0" width="1.5" height="1.5"/><rect x="4" y="0" width="1.5" height="1.5"/><rect x="8" y="0" width="1.5" height="1.5"/><rect x="12" y="0" width="1.5" height="1.5"/></g></svg>
<div class="a" style="left:437px;top:492px;width:153px;height:24px;background:linear-gradient(to bottom,#e2e5e9,#d1d5db);border:1px solid #a3a8af;border-bottom:none"></div>
<div class="a" style="left:589px;top:492px;width:122px;height:24px;background:linear-gradient(to bottom,#e2e5e9,#d1d5db);border:1px solid #a3a8af;border-bottom:none"></div>
<div class="a" style="left:905px;top:492px;width:118px;height:24px;background:linear-gradient(to bottom,#e2e5e9,#d1d5db);border:1px solid #a3a8af;border-bottom:none"></div>
<div class="a" style="left:710px;top:490px;width:196px;height:27px;background:#ffffff;border:1px solid #a3a8af;border-bottom:none"></div>
<div class="t" style="left:445.5px;top:499px;font-size:12.7px;color:#3a3a40;">Порождаемые события</div>
<div class="t" style="left:598.4px;top:499px;font-size:12.7px;color:#3a3a40;">Цели по процессу</div>
<div class="t" style="left:719.4px;top:498px;font-size:12.7px;color:#222228;">Список ограничений процесса</div>
<div class="t" style="left:913.2px;top:499px;font-size:12.7px;color:#3a3a40;">Внутренние НМД</div>
<svg style="left:1026px;top:497px" width="30" height="12" viewBox="0 0 30 12"><path d="M7 1.5 L2.5 5.8 L7 10Z" fill="#55585e"/><path d="M21 1.5 L25.5 5.8 L21 10Z" fill="#55585e"/></svg>
<div class="a" style="left:433px;top:515px;width:624px;height:132px;background:#fff;border:2px solid #9da2aa;box-shadow:1px 1px 2px rgba(120,125,135,.3)"></div>
<div class="a" style="left:435px;top:517px;width:620px;height:22px;background:linear-gradient(to bottom,#f7f8fa,#eceef2)"></div>
<div class="a" style="left:435px;top:539px;width:620px;height:1px;background:#a8adb5"></div>
<div class="a" style="left:435px;top:540px;width:620px;height:20px;background:#ffffff"></div>
<div class="a" style="left:435px;top:560px;width:620px;height:1px;background:#c9cdd3"></div>
<div class="a" style="left:435px;top:561px;width:620px;height:20px;background:#e8eaed"></div>
<div class="a" style="left:435px;top:581px;width:620px;height:1px;background:#d3d6db"></div>
<div class="a" style="left:435px;top:582px;width:620px;height:20px;background:#ffffff"></div>
<div class="a" style="left:435px;top:602px;width:620px;height:1px;background:#d3d6db"></div>
<div class="a" style="left:435px;top:517px;width:15px;height:86px;background:#f3f4f7"></div>
<div class="a" style="left:450px;top:517px;width:1px;height:86px;background:#a8adb5"></div>
<div class="a" style="left:435px;top:539px;width:16px;height:1px;background:#a8adb5"></div>
<div class="a" style="left:435px;top:560px;width:16px;height:1px;background:#a8adb5"></div>
<div class="a" style="left:435px;top:581px;width:16px;height:1px;background:#a8adb5"></div>
<div class="a" style="left:435px;top:602px;width:16px;height:1px;background:#a8adb5"></div>
<svg style="left:440px;top:588px" width="6" height="9" viewBox="0 0 6 9"><path d="M1 0.5 L5 4.5 L1 8.5Z" fill="#6b6b78"/></svg>
<div class="t" style="left:455px;top:522px;font-size:12.7px;color:#3a3a40;">Список ограничений процесса</div>
<div class="t" style="left:455px;top:545px;font-size:12.7px;color:#0c0c10;">Ошибки в заявке на отгрузку продукции</div>
<div class="t" style="left:455px;top:566px;font-size:12.7px;color:#0c0c10;">Сбои связи из-за частых гроз</div>
<svg style="left:455px;top:582px" width="12" height="13" viewBox="0 0 12 13"><path d="M0.5 -0.5h7l3.5 3.5v9.5h-10.5z" fill="#f7f9fc" stroke="#8a98b8" stroke-width="0.9"/><path d="M0.5 12.5h10.5v-9" fill="none" stroke="#5a6a90" stroke-width="1"/></svg>
<div class="t" style="left:471.3px;top:585px;font-size:12px;color:#58585e;font-weight:bold">Трудоемкость разработки тех. условий</div>
</body></html>
